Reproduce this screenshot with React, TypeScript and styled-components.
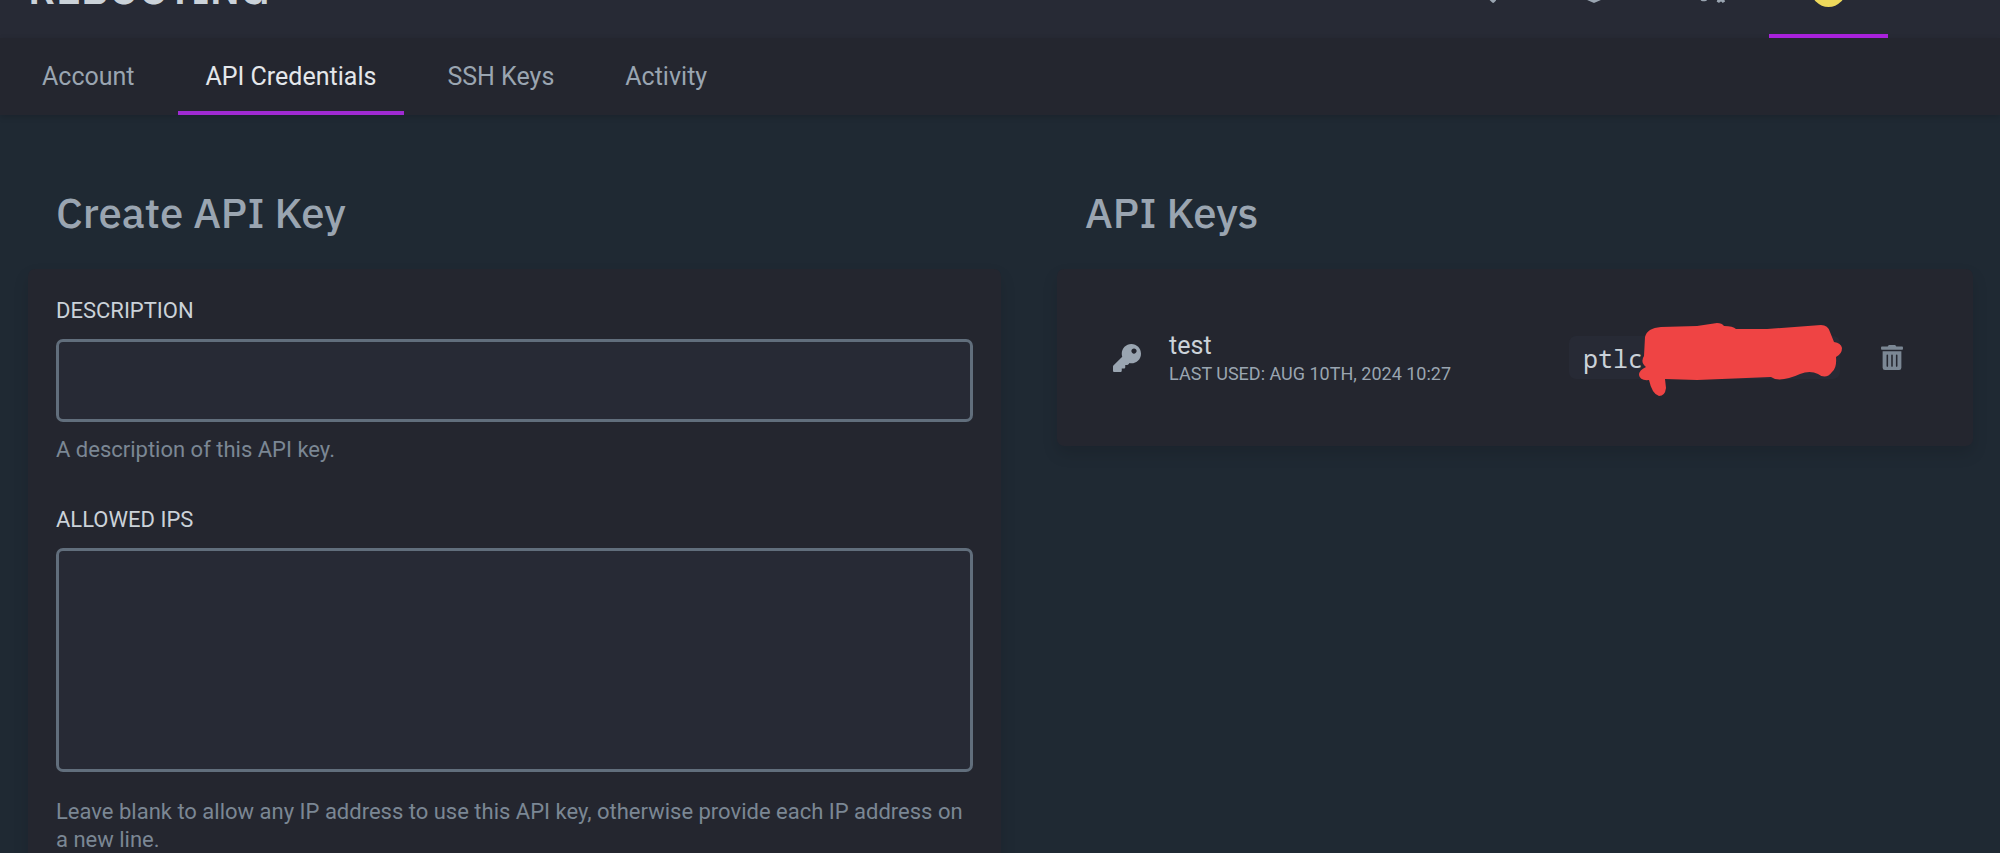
import React from 'react';
import styled, { createGlobalStyle } from 'styled-components';
import { FaCogs, FaKey, FaLayerGroup, FaSearch, FaSignOutAlt, FaTrashAlt } from 'react-icons/fa';

const GlobalStyle = createGlobalStyle`
  *, *::before, *::after { box-sizing: border-box; }
  html { background: #1f2933; }
  body {
    margin: 0;
    height: 100vh;
    overflow: hidden;
    background: #1f2933;
    color: #cbd2d9;
    font-family: Roboto, sans-serif;
    font-size: 25px;
    line-height: 32px;
  }
  a { color: inherit; text-decoration: none; }
  h2, p { margin: 0; }
`;

const Header = styled.header`
  display: flex;
  justify-content: space-between;
  align-items: flex-end;
  height: 38px;
  padding-left: 28px;
  overflow: hidden;
  background: #272a35;
`;

const Brand = styled.a`
  display: flex;
  align-items: center;
  height: 98px;
  color: #cbd2d9;
  font-family: 'IBM Plex Sans', Inter, sans-serif;
  font-feature-settings: 'cv08';
  font-weight: 600;
  font-size: 42px;
`;

const TopNav = styled.nav`
  display: flex;
`;

const TopLink = styled.a<{ $active?: boolean; $wide?: boolean }>`
  display: flex;
  align-items: center;
  height: 98px;
  padding: 0 42px;
  color: #9aa5b1;
  box-shadow: ${({ $active }) => ($active ? 'inset 0 -4px #a922dc' : 'none')};

  svg {
    width: ${({ $wide }) => ($wide ? 35 : 28)}px;
    height: 28px;
  }
`;

const Avatar = styled.span`
  width: 35px;
  height: 35px;
  border-radius: 50%;
  background: #eed95c;
`;

const SubNav = styled.nav`
  display: flex;
  height: 77px;
  padding: 0 14px;
  gap: 15px;
  background: #24262f;
  box-shadow: 0 2px 6px rgba(0, 0, 0, 0.15);
`;

const SubLink = styled.a<{ $active?: boolean }>`
  display: flex;
  align-items: center;
  padding: 1px 28px 0;
  color: ${({ $active }) => ($active ? '#e4e7eb' : '#9aa5b1')};
  box-shadow: ${({ $active }) => ($active ? 'inset 0 -4px #9f2ad2' : 'none')};
`;

const Main = styled.main`
  display: grid;
  grid-template-columns: minmax(0, 17fr) minmax(0, 16fr);
  align-items: start;
  column-gap: 56px;
  padding: 70px 27px 0 28px;
`;

const Title = styled.h2`
  margin-bottom: 28px;
  padding: 0 28px;
  color: #9aa5b1;
  font-family: 'IBM Plex Sans', Inter, sans-serif;
  font-feature-settings: 'cv08';
  font-weight: 500;
  font-size: 42px;
  line-height: 56px;
`;

const Card = styled.div`
  padding: 28px;
  border-radius: 7px;
  background: #24262f;
  box-shadow: 0 8px 16px rgba(0, 0, 0, 0.12);
`;

const Field = styled.div`
  display: flex;
  flex-direction: column;
  margin-bottom: 42px;
`;

const Label = styled.label`
  margin-bottom: 14px;
  font-size: 22px;
  line-height: 28px;
  text-transform: uppercase;
`;

const controlStyle = `
  width: 100%;
  padding: 20px;
  border: 3px solid #616e7c;
  border-radius: 7px;
  outline: none;
  background: #272a35;
  color: #cbd2d9;
  font: inherit;
`;

const TextInput = styled.input`
  ${controlStyle}
  height: 83px;
`;

const TextArea = styled.textarea`
  ${controlStyle}
  height: 224px;
  resize: none;
`;

const Hint = styled.p<{ $spaced?: boolean }>`
  margin-top: ${({ $spaced }) => ($spaced ? 26 : 14)}px;
  color: #7b8794;
  font-size: 22px;
  line-height: 28px;
`;

const KeyRow = styled.div`
  display: flex;
  align-items: center;
  height: 121px;
  padding: 0 28px;
  color: #9aa5b1;
`;

const KeyInfo = styled.div`
  flex: 1;
  margin-left: 28px;
  padding-top: 4px;
`;

const KeyName = styled.p`
  color: #cbd2d9;
  line-height: 28px;
`;

const LastUsed = styled.p`
  font-size: 18px;
  line-height: 28px;
  text-transform: uppercase;
`;

const Token = styled.code`
  position: relative;
  width: 271px;
  padding: 6px 14px 4px;
  border-radius: 7px;
  background: #272a35;
  color: #cbd2d9;
  font-family: 'Droid Sans Mono', 'Noto Sans Mono', 'Liberation Mono', monospace;
  font-size: 25px;
  line-height: 33px;
`;

const Scribble = styled.svg`
  position: absolute;
  top: -16px;
  left: 68px;
`;

const DeleteButton = styled.button`
  display: flex;
  margin-left: 27px;
  padding: 14px;
  border: 0;
  background: none;
  color: #7b8794;
  cursor: pointer;

  svg {
    width: 22px;
    height: 25px;
  }
`;

export default function App() {
  return (
    <>
      <GlobalStyle />
      <Header>
        <Brand href="#">REBOOTING</Brand>
        <TopNav>
          <TopLink href="#" aria-label="Search"><FaSearch /></TopLink>
          <TopLink href="#" aria-label="Dashboard"><FaLayerGroup /></TopLink>
          <TopLink href="#" aria-label="Admin" $wide><FaCogs /></TopLink>
          <TopLink href="#" aria-label="Account settings" $active><Avatar /></TopLink>
          <TopLink href="#" aria-label="Sign out"><FaSignOutAlt /></TopLink>
        </TopNav>
      </Header>
      <SubNav>
        <SubLink href="#">Account</SubLink>
        <SubLink href="#" $active>API Credentials</SubLink>
        <SubLink href="#">SSH Keys</SubLink>
        <SubLink href="#">Activity</SubLink>
      </SubNav>
      <Main>
        <section>
          <Title>Create API Key</Title>
          <Card as="form">
            <Field>
              <Label htmlFor="description">Description</Label>
              <TextInput id="description" />
              <Hint>A description of this API key.</Hint>
            </Field>
            <Field>
              <Label htmlFor="ips">Allowed IPs</Label>
              <TextArea id="ips" />
              <Hint $spaced>
                Leave blank to allow any IP address to use this API key, otherwise provide each IP address on a new line.
              </Hint>
            </Field>
          </Card>
        </section>
        <section>
          <Title>API Keys</Title>
          <Card>
            <KeyRow>
              <FaKey size={28} />
              <KeyInfo>
                <KeyName>test</KeyName>
                <LastUsed>Last used: Aug 10th, 2024 10:27</LastUsed>
              </KeyInfo>
              <Token>
                ptlc
                <Scribble width="208" height="78" viewBox="0 0 208 78" fill="#ef4444" aria-hidden="true">
                  <path d="M8 17Q10 8 24 7L60 6L80 3Q85 3 87 6Q96 6 99 9L130 9L184 5Q191 5 193 12L197 22Q204 23 205 28Q205 34 199 37Q200 48 195 52Q189 60 181 54Q173 50 163 54Q148 61 138 59L134 57L60 60L28 59L29 68Q28 76 22 76Q15 74 12 60Q3 61 2 55Q2 50 9 47Q3 42 7 36Z" />
                </Scribble>
              </Token>
              <DeleteButton type="button" aria-label="Delete API key">
                <FaTrashAlt />
              </DeleteButton>
            </KeyRow>
          </Card>
        </section>
      </Main>
    </>
  );
}
